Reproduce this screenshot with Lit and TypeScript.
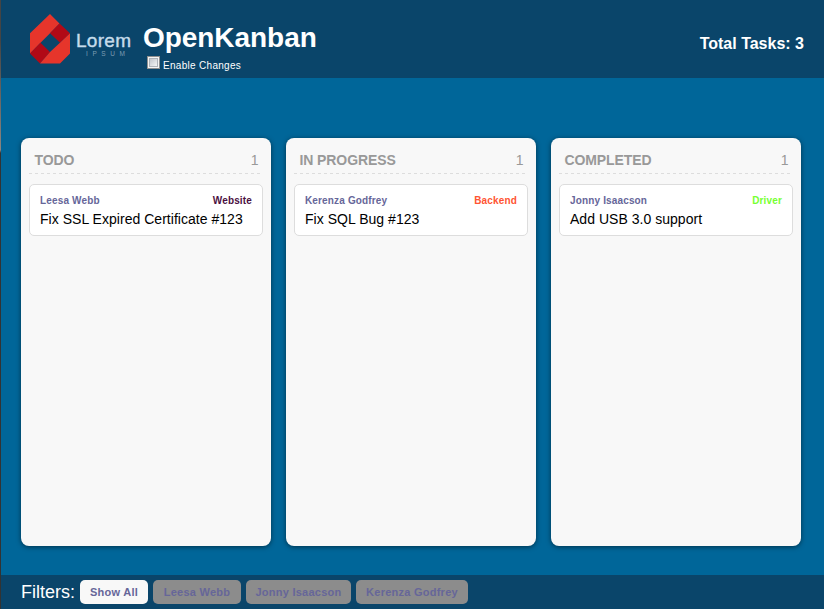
import { LitElement, html, css, svg } from "lit";
import { customElement, property } from "lit/decorators.js";

interface Task { owner: string; tag: string; color: string; title: string }
interface Column { name: string; tasks: Task[] }

const COLUMNS: Column[] = [
  { name: "TODO", tasks: [{ owner: "Leesa Webb", tag: "Website", color: "#4b0f3f", title: "Fix SSL Expired Certificate #123" }] },
  { name: "IN PROGRESS", tasks: [{ owner: "Kerenza Godfrey", tag: "Backend", color: "#ff5533", title: "Fix SQL Bug #123" }] },
  { name: "COMPLETED", tasks: [{ owner: "Jonny Isaacson", tag: "Driver", color: "#77ff33", title: "Add USB 3.0 support" }] },
];

@customElement("kanban-logo")
export class KanbanLogo extends LitElement {
  static styles = css`
    :host { display: flex; }
    svg { display: block; }
    .name { font: 19px "Liberation Sans", Arial, sans-serif; fill: #c5dcea; stroke: #c5dcea; stroke-width: 0.4px; }
    .sub { font: 6.5px "Liberation Sans", Arial, sans-serif; fill: #7d9db3; }
  `;
  render() {
    return html`<svg width="104" height="52" viewBox="0 0 104 52">
      ${svg`
        <path fill="#e6352b" d="M21 0 30.5 9.5 21 19.300 11.500 28.700 1 39.500V19.300Z"/>
        <path fill="#b10916" d="M30.500 9.500 41 19.300 31 28.700 21 19.300Z M11.500 28.700 21 38 11 49.500 1 39.500Z"/>
        <path fill="#e6352b" d="M41 19.300V39.500L31 49.500H11L21 38 31 28.700Z"/>
        <text class="name" x="47" y="32.700" textLength="55">Lorem</text>
        <text class="sub" x="57" y="41.500" textLength="39">IPSUM</text>`}
    </svg>`;
  }
}

@customElement("kanban-column")
export class KanbanColumn extends LitElement {
  @property({ attribute: false }) column!: Column;
  static styles = css`
    :host {
      display: block; box-sizing: border-box; width: 250px; height: 408px; padding: 8px;
      border-radius: 8px; background: #f8f8f8; box-shadow: 0 1px 5px rgba(0, 0, 0, 0.5);
    }
    .head {
      display: flex; justify-content: space-between; box-sizing: border-box; height: 28px;
      padding: 5px 4.500px 0 5.500px; color: #999; font-size: 14px; line-height: 18px;
    }
    .name { font-weight: bold; letter-spacing: -0.1px; }
    .rule {
      height: 1px; width: 234px;
      background: repeating-linear-gradient(90deg, #ddd 0 3px, transparent 3px 6px);
      margin-top: -1px;
    }
    .card {
      box-sizing: border-box; height: 52px; margin-top: 10px; padding: 9px 10px;
      border: 1px solid #ddd; border-radius: 5px; background: #fff;
    }
    .meta { display: flex; justify-content: space-between; font-size: 10px; line-height: 14px; font-weight: bold; color: #669; letter-spacing: 0.15px; }
    .title { margin-top: 2px; font-size: 14px; line-height: 18px; color: #000; white-space: nowrap; letter-spacing: 0.03px; }
  `;
  render() {
    const { name, tasks } = this.column;
    return html`
      <div class="head"><span class="name">${name}</span><span>${tasks.length}</span></div>
      <div class="rule"></div>
      ${tasks.map((t) => html`<div class="card">
        <div class="meta"><span>${t.owner}</span><span style="color:${t.color}">${t.tag}</span></div>
        <div class="title">${t.title}</div>
      </div>`)}`;
  }
}

@customElement("app-root")
export class AppRoot extends LitElement {
  static styles = css`
    :host {
      display: flex; box-sizing: border-box; height: 609px; width: 824px; overflow: hidden;
      font-family: "Liberation Sans", Arial, sans-serif; color: #fff;
    }
    .edge { width: 1px; flex: none; background: linear-gradient(#444 0, #444 40px, #8b8580 150px, #333 153px, #333 100%); }
    .app { flex: 1; display: flex; flex-direction: column; background: #069; }
    header { display: flex; height: 78px; box-sizing: border-box; padding-left: 28px; background: #0a456a; }
    kanban-logo { margin-top: 14px; }
    .brand { margin-left: 10px; padding-top: 22px; }
    h1 { margin: 0; font-size: 28px; line-height: 32px; letter-spacing: -0.05px; }
    .toggle { display: flex; padding: 2px 0 0 4px; font-size: 10px; line-height: 20px; letter-spacing: 0.3px; }
    .box {
      box-sizing: border-box; width: 13px; height: 13px; margin-right: 3px; border: 1px solid #8e8f8f;
      background: linear-gradient(135deg, #c2c7cd, #f4f4f4) 50% / 7px 7px no-repeat, #f4f4f4;
      outline: 1px solid #aeb3b9; outline-offset: -3px;
    }
    .total { margin: 34px 20px 0 auto; font-size: 16px; line-height: 20px; font-weight: bold; }
    main { flex: 1; display: flex; gap: 15px; padding: 60px 0 0 20px; align-items: flex-start; }
    footer { display: flex; align-items: flex-start; gap: 5px; box-sizing: border-box; height: 34px; padding: 5px 0 0 20px; background: #0a456a; }
    .label { width: 54px; font-size: 18px; line-height: 24px; white-space: nowrap; }
    .filter {
      box-sizing: border-box; height: 24px; border: 0; padding: 0; border-radius: 5px; background: #8c8c8c;
      font: bold 11px/24px "Liberation Sans", Arial, sans-serif; color: #669; text-align: center; letter-spacing: 0.25px;
    }
    .active { width: 68px; background: #f8f8f8; }
    .leesa { width: 88px; }
    .jonny { width: 105px; }
    .kerenza { width: 112px; }
  `;
  render() {
    const total = COLUMNS.reduce((n, c) => n + c.tasks.length, 0);
    return html`
      <div class="edge"></div>
      <div class="app">
        <header>
          <kanban-logo></kanban-logo>
          <div class="brand">
            <h1>OpenKanban</h1>
            <div class="toggle"><span class="box"></span><span>Enable Changes</span></div>
          </div>
          <div class="total">Total Tasks: ${total}</div>
        </header>
        <main>${COLUMNS.map((c) => html`<kanban-column .column=${c}></kanban-column>`)}</main>
        <footer>
          <span class="label">Filters:</span>
          <button class="filter active">Show All</button>
          <button class="filter leesa">Leesa Webb</button>
          <button class="filter jonny">Jonny Isaacson</button>
          <button class="filter kerenza">Kerenza Godfrey</button>
        </footer>
      </div>`;
  }
}
